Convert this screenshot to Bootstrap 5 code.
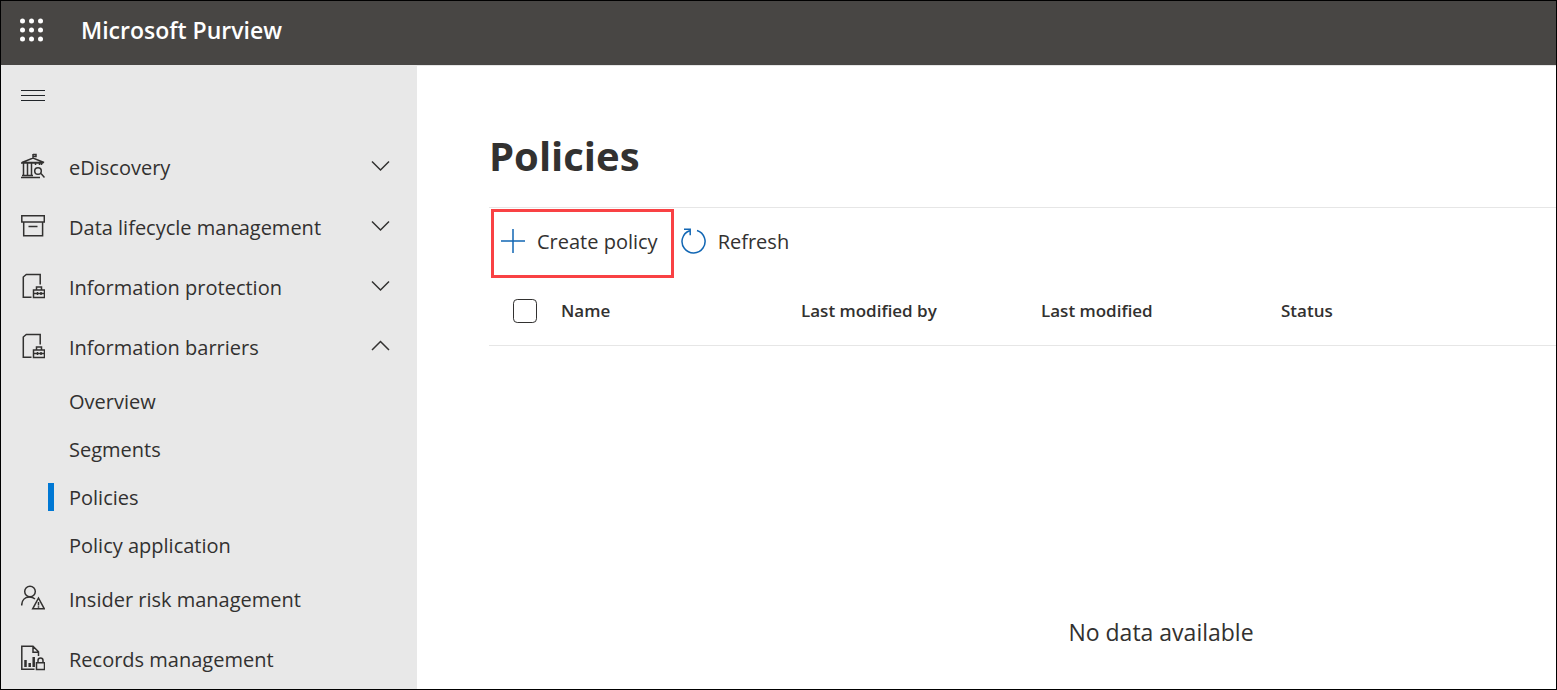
<!DOCTYPE html>
<html lang="en">
<head>
<meta charset="utf-8">
<meta name="viewport" content="width=device-width, initial-scale=1">
<title>Policies - Microsoft Purview</title>
<link href="https://cdn.jsdelivr.net/npm/bootstrap@5.3.0/dist/css/bootstrap.min.css" rel="stylesheet">
<style>
  body { font-family: "Open Sans", "Noto Sans", sans-serif; font-size: 20px; line-height: 28px; color: #323130; background: #fff; }
  svg { display: block; flex: none; fill: none; stroke: currentColor; stroke-width: 1.5; }
  .shell { border: 1px solid #000; }
  .topbar { height: 64px; background: #484644; padding: 0 18px 6px; gap: 36px; }
  .launcher svg { fill: #fff; stroke: none; }
  .brand-name { font-size: 23px; font-weight: 600; color: #fff; }
  .sidebar { width: 416px; background: #e8e8e8; }
  .menu-row { height: 72px; padding: 18px 20px 0; }
  .side-link { height: 60px; width: 100%; padding: 0 27px 0 20px; gap: 24px; font-size: 20px; line-height: 28px; color: #323130; text-decoration: none; }
  .side-link svg { margin-bottom: 2px; }
  .side-link span { padding-top: 2px; }
  .sub-link { height: 48px; padding-left: 47px; color: #323130; text-decoration: none; }
  .sub-link span { padding-top: 2px; }
  .sub-link::before { content: ""; width: 6px; height: 28px; margin-right: 15px; }
  .sub-link.active::before { background: #0078d4; }
  .content { border-top: 1px solid #e6e6e6; padding: 60px 0 0 72px; }
  .page-title { font-size: 40px; line-height: 60px; font-weight: 700; margin: 0 0 21px; }
  .rule-top { border-top: 1px solid #e6e6e6; padding: 1px 2px 0; gap: 7px; }
  .tool { height: 69px; gap: 12px; padding: 0 13px 6px 7px; font-size: 20px; line-height: 28px; color: #323130; border: 3px solid transparent; }
  .tool span { padding-top: 2px; }
  .tool svg { color: #1267b4; }
  .tool.marked { border-color: #f94144; }
  .tool.plain { padding-left: 0; border-left-width: 0; }
  .policy-table { table-layout: fixed; margin: 0; font-size: 17px; --bs-table-bg: transparent; color: #323130; }
  .policy-table th { height: 67px; padding: 0; vertical-align: middle; font-weight: 600; border-bottom: 1px solid #e6e6e6; }
  .policy-table th.pick { padding-left: 24px; }
  .pick-col { width: 72px; }
  .data-col { width: 240px; }
  .policy-table td { border: 0; padding: 272px 0 0 277px; text-align: center; font-size: 23px; line-height: 28px; }
  .form-check-input { display: block; width: 24px; height: 24px; margin: 0; border: 1px solid #323130; border-radius: 3px; }
</style>
</head>
<body>
<div class="shell d-flex flex-column min-vh-100">
  <header class="topbar d-flex align-items-center">
    <button type="button" class="btn p-0 border-0 launcher" aria-label="App launcher">
      <svg width="26" height="25" viewBox="0 0 26 25"><circle cx="3.500" cy="3" r="2.500"/><circle cx="12.500" cy="3" r="2.500"/><circle cx="21.500" cy="3" r="2.500"/><circle cx="3.500" cy="12" r="2.500"/><circle cx="12.500" cy="12" r="2.500"/><circle cx="21.500" cy="12" r="2.500"/><circle cx="3.500" cy="21" r="2.500"/><circle cx="12.500" cy="21" r="2.500"/><circle cx="21.500" cy="21" r="2.500"/></svg>
    </button>
    <span class="brand-name">Microsoft Purview</span>
  </header>
  <div class="d-flex flex-grow-1">
    <nav class="sidebar flex-shrink-0" aria-label="Main">
      <div class="menu-row d-flex align-items-start">
        <button type="button" class="btn p-0 border-0" aria-label="Collapse navigation">
          <svg width="24" height="24" viewBox="0 0 24 24"><path stroke-width="1" style="stroke-width:1" d="M0 7.500H24M0 12.500H24M0 17.500H24"/></svg>
        </button>
      </div>
      <button type="button" class="btn rounded-0 border-0 side-link d-flex align-items-center text-start" aria-expanded="false">
        <svg width="24" height="26" viewBox="0 0 24 26"><path d="M12 6V1M12 1.500h3v2h-3M1 9.500L12 5l11 4.500zM0 10h22M2.500 10v12M6.500 10v12M10.500 10v12M1 22.500h11M0 24.500h19M14.500 10v2M18.500 10v2M20.500 10v2M20 20.500l3.500 4"/><circle cx="17" cy="18" r="3.300"/></svg>
        <span class="flex-grow-1">eDiscovery</span>
        <svg width="20" height="20" viewBox="0 0 20 20"><path d="M2 5.500L10.500 14L19 5.500"/></svg>
      </button>
      <button type="button" class="btn rounded-0 border-0 side-link d-flex align-items-center text-start" aria-expanded="false">
        <svg width="24" height="26" viewBox="0 0 24 26"><path d="M.8 2.700H23.300V9H.8zM2.700 9V22.700H21.600V9M7.500 13.600h9"/></svg>
        <span class="flex-grow-1">Data lifecycle management</span>
        <svg width="20" height="20" viewBox="0 0 20 20"><path d="M2 5.500L10.500 14L19 5.500"/></svg>
      </button>
      <button type="button" class="btn rounded-0 border-0 side-link d-flex align-items-center text-start" aria-expanded="false">
        <svg width="24" height="26" viewBox="0 0 24 26"><path d="M10.500 24.200H2.300V4L5.300 1.500H19.200V11.500M12.500 17h11v7.500h-11zM15.500 17v-3h5v3M12.500 20.500h11M16.500 19v3M20 19v3"/></svg>
        <span class="flex-grow-1">Information protection</span>
        <svg width="20" height="20" viewBox="0 0 20 20"><path d="M2 5.500L10.500 14L19 5.500"/></svg>
      </button>
      <button type="button" class="btn rounded-0 border-0 side-link d-flex align-items-center text-start" aria-expanded="true" aria-controls="barriers">
        <svg width="24" height="26" viewBox="0 0 24 26"><path d="M10.500 24.200H2.300V4L5.300 1.500H19.200V11.500M12.500 17h11v7.500h-11zM15.500 17v-3h5v3M12.500 20.500h11M16.500 19v3M20 19v3"/></svg>
        <span class="flex-grow-1">Information barriers</span>
        <svg width="20" height="20" viewBox="0 0 20 20"><path d="M2 14L10.500 5.500L19 14"/></svg>
      </button>
      <div id="barriers">
        <a href="#" class="sub-link d-flex align-items-center"><span>Overview</span></a>
        <a href="#" class="sub-link d-flex align-items-center"><span>Segments</span></a>
        <a href="#" class="sub-link d-flex align-items-center active" aria-current="page"><span>Policies</span></a>
        <a href="#" class="sub-link d-flex align-items-center"><span>Policy application</span></a>
      </div>
      <a href="#" class="side-link d-flex align-items-center">
        <svg width="24" height="26" viewBox="0 0 24 26"><circle cx="9" cy="6.500" r="5.300"/><path d="M.7 20.500C.7 15 4 12 8.500 12C11 12 12.500 12.700 14 14M17.500 13L23.300 23.800H11.700zM17.500 17v3.500M17.500 21.300v1.500"/></svg>
        <span>Insider risk management</span>
      </a>
      <a href="#" class="side-link d-flex align-items-center">
        <svg width="24" height="26" viewBox="0 0 24 26"><path d="M13.500 24.200H.8V1.300H12L17.500 6.800V11M12 1.300V7.300H17.500M15.500 17.700h8v6.700h-8zM17 17.500V15.500a2.500 2.500 0 0 1 5 0V17.500"/><path style="stroke-width:2.500" d="M4.500 15v7M8.700 18v4M12.700 12v10"/></svg>
        <span>Records management</span>
      </a>
    </nav>
    <main class="content flex-grow-1">
      <h1 class="page-title">Policies</h1>
      <div class="rule-top d-flex" role="toolbar" aria-label="Policy actions">
        <button type="button" class="btn rounded-0 tool marked d-flex align-items-center">
          <svg width="24" height="24" viewBox="0 0 24 24"><path d="M12 0V24M0 12H24"/></svg><span>Create policy</span>
        </button>
        <button type="button" class="btn rounded-0 tool plain d-flex align-items-center">
          <svg width="25" height="26" viewBox="0 0 25 26"><path d="M8.500 2.700A11.500 11.500 0 1 0 16 2.500M3 1.200H9.200V7.200"/></svg><span>Refresh</span>
        </button>
      </div>
      <table class="table policy-table">
        <colgroup><col class="pick-col"><col class="data-col"><col class="data-col"><col class="data-col"><col></colgroup>
        <thead>
          <tr>
            <th scope="col" class="pick"><input class="form-check-input" type="checkbox" aria-label="Select all policies"></th>
            <th scope="col">Name</th>
            <th scope="col">Last modified by</th>
            <th scope="col">Last modified</th>
            <th scope="col">Status</th>
          </tr>
        </thead>
        <tbody>
          <tr><td colspan="5">No data available</td></tr>
        </tbody>
      </table>
    </main>
  </div>
</div>
<script src="https://cdn.jsdelivr.net/npm/bootstrap@5.3.0/dist/js/bootstrap.bundle.min.js"></script>
</body>
</html>
